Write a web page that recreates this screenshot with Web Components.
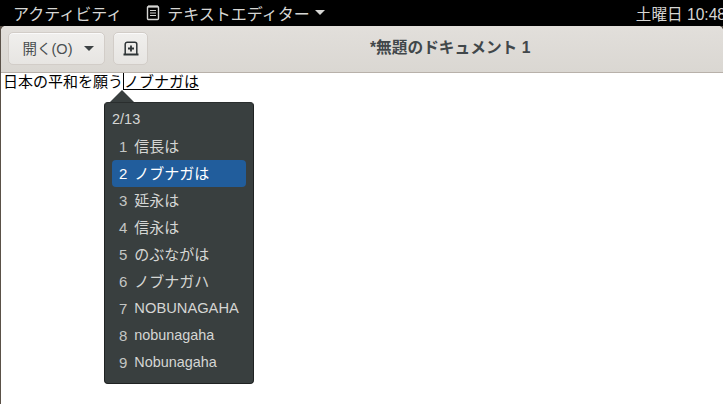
<!DOCTYPE html>
<html lang="ja">
<head>
<meta charset="utf-8">
<title>テキストエディター</title>
<style>
  html, body { margin: 0; height: 100%; background: #5a5148; overflow: hidden; }
  body { font-family: "Liberation Sans", "Noto Sans CJK JP", sans-serif; font-size: 15px; width: 723px; height: 404px; display: flex; flex-direction: column; }
</style>
</head>
<body>
<top-bar></top-bar>
<editor-window>
  <header-bar title="*無題のドキュメント 1"></header-bar>
  <text-view>
    <candidate-popup page="2/13" selected="2"></candidate-popup>
  </text-view>
</editor-window>

<script>
class TopBar extends HTMLElement {
  constructor() {
    super();
    this.attachShadow({ mode: "open" });
  }

  connectedCallback() {
    this.shadowRoot.innerHTML = /* html */`
    <style>
      :host { display: flex; align-items: center; flex: 0 0 26px; height: 26px; background: #000; color: #d6d6d4; font-size: 16px; padding: 0 0 1px 13px; box-sizing: border-box; overflow: hidden; white-space: nowrap; }
      .app { display: flex; align-items: center; margin-left: 24px; }
      .app svg { margin-right: 7px; }
      .arrow { width: 0; height: 0; margin-left: 5px; border: 5px solid transparent; border-top-color: #d6d6d4; border-bottom: 0; }
      .clock { margin-left: auto; margin-right: -3px; font-size: 15.6px; }
    </style>
    <span>アクティビティ</span>
    <span class="app">
      <svg width="14" height="17" viewBox="0 0 14 17" fill="none" stroke="#d6d6d4">
        <rect x="1.5" y="2.5" width="11" height="13" rx="1" stroke-width="1.4"/>
        <path d="M3 1v3M5 1v3M7 1v3M9 1v3M11 1v3" stroke-width="1"/>
        <path d="M4 6.5h6M4 9h6M4 11.5h6" stroke-width="1.2"/>
      </svg>
      テキストエディター<span class="arrow"></span>
    </span>
    <span class="clock">土曜日 10:48</span>`;
  }
}

class EditorWindow extends HTMLElement {
  constructor() {
    super();
    this.attachShadow({ mode: "open" });
  }

  connectedCallback() {
    this.shadowRoot.innerHTML = /* html */`
    <style>
      :host { display: flex; flex-direction: column; flex: 1; min-height: 0; background: #fff; border-radius: 5px 5px 0 0; margin-left: 1px; overflow: hidden; }
    </style>
    <slot></slot>`;
  }
}

class HeaderBar extends HTMLElement {
  constructor() {
    super();
    this.attachShadow({ mode: "open" });
  }

  connectedCallback() {
    this.shadowRoot.innerHTML = /* html */`
    <style>
      :host { display: flex; align-items: center; gap: 8px; flex: 0 0 47px; height: 47px; box-sizing: border-box; padding: 0 0 1px 7px; background: linear-gradient(#e2dfdb, #dad7d2); border-bottom: 1px solid #b8b1aa; color: #2e3436; position: relative; }
      button { font: inherit; color: #4a4f50; height: 33px; padding: 0; display: flex; align-items: center; justify-content: center; background: linear-gradient(#f0efed, #e7e5e2); border: 1px solid #d2cdc8; border-radius: 5px; box-shadow: inset 0 1px #fafafa; box-sizing: border-box; }
      .open { width: 97px; gap: 12px; padding: 0 0 2px 4px; font-size: 14.5px; }
      .open i { width: 0; height: 0; margin-top: 2px; border: 5px solid transparent; border-top-color: #3d4244; border-bottom: 0; }
      .new { width: 35px; }
      .title { position: absolute; left: 369px; top: 12px; font-weight: 700; font-size: 15.7px; line-height: 20px; color: #41474a; white-space: nowrap; }
    </style>
    <button class="open">開く(O)<i></i></button>
    <button class="new" aria-label="新規">
      <svg width="16" height="15" viewBox="0 0 16 15" fill="none" stroke="#2e3436">
        <path d="M2.2 13V3.2a2 2 0 0 1 2-2h7.6a2 2 0 0 1 2 2V13" stroke-width="1.5"/>
        <path d="M.5 13.5h15" stroke-width="2"/>
        <path d="M8 4.5v6M5 7.5h6" stroke-width="1.8"/>
      </svg>
    </button>
    <span class="title">${this.getAttribute("title")}</span>`;
  }
}

class TextView extends HTMLElement {
  constructor() {
    super();
    this.attachShadow({ mode: "open" });
  }

  connectedCallback() {
    this.shadowRoot.innerHTML = /* html */`
    <style>
      :host { display: block; flex: 1; position: relative; background: #fff; color: #000; font-size: 15px; line-height: 18px; padding: 0 0 0 2px; white-space: nowrap; }
      .preedit { text-decoration: underline; text-underline-offset: 2px; border-left: 1px solid #000; }
    </style>
    <span>日本の平和を願う</span><span class="preedit">ノブナガは</span>
    <slot></slot>`;
  }
}

class CandidatePopup extends HTMLElement {
  constructor() {
    super();
    this.attachShadow({ mode: "open" });
  }

  static get candidates() {
    return ["信長は", "ノブナガは", "延永は", "信永は", "のぶながは", "ノブナガハ", "NOBUNAGAHA", "nobunagaha", "Nobunagaha"];
  }

  connectedCallback() {
    const selected = Number(this.getAttribute("selected"));
    const rows = CandidatePopup.candidates.map((text, i) => /* html */`
      <div class="row ${i + 1 === selected ? "on" : ""}"><span class="num">${i + 1}</span><span>${text}</span></div>`).join("");

    this.shadowRoot.innerHTML = /* html */`
    <style>
      :host { position: absolute; left: 103px; top: 29px; width: 150px; height: 282px; box-sizing: border-box; padding: 3px 7px 0; background: #393f3f; border: 1px solid #1f2222; border-top-color: #2a2e2e; border-radius: 4px; color: #d5d6d4; font-size: 15px; }
      .arrow { position: absolute; left: 5px; top: -13px; width: 24px; height: 12px; }
      .page { height: 27px; line-height: 27px; font-size: 14.5px; }
      .row { display: flex; gap: 7px; height: 27px; line-height: 27px; padding-left: 7px; border-radius: 4px; white-space: nowrap; font-size: 15px; }
      .row span:last-child { font-size: 15px; }
      .row:nth-of-type(8) span:last-child { font-size: 14.7px; }
      .row:nth-of-type(n+9) span:last-child { font-size: 14.4px; }
      .num { color: #c4c6c4; }
      .on { background: #215d9c; color: #fff; }
      .on .num { color: #fff; }
    </style>
    <svg class="arrow" viewBox="0 0 24 12"><path d="M0 12 12 0l12 12z" fill="#393f3f"/></svg>
    <div class="page">${this.getAttribute("page")}</div>
    ${rows}`;
  }
}

customElements.define("top-bar", TopBar);
customElements.define("editor-window", EditorWindow);
customElements.define("header-bar", HeaderBar);
customElements.define("text-view", TextView);
customElements.define("candidate-popup", CandidatePopup);
</script>
</body>
</html>
